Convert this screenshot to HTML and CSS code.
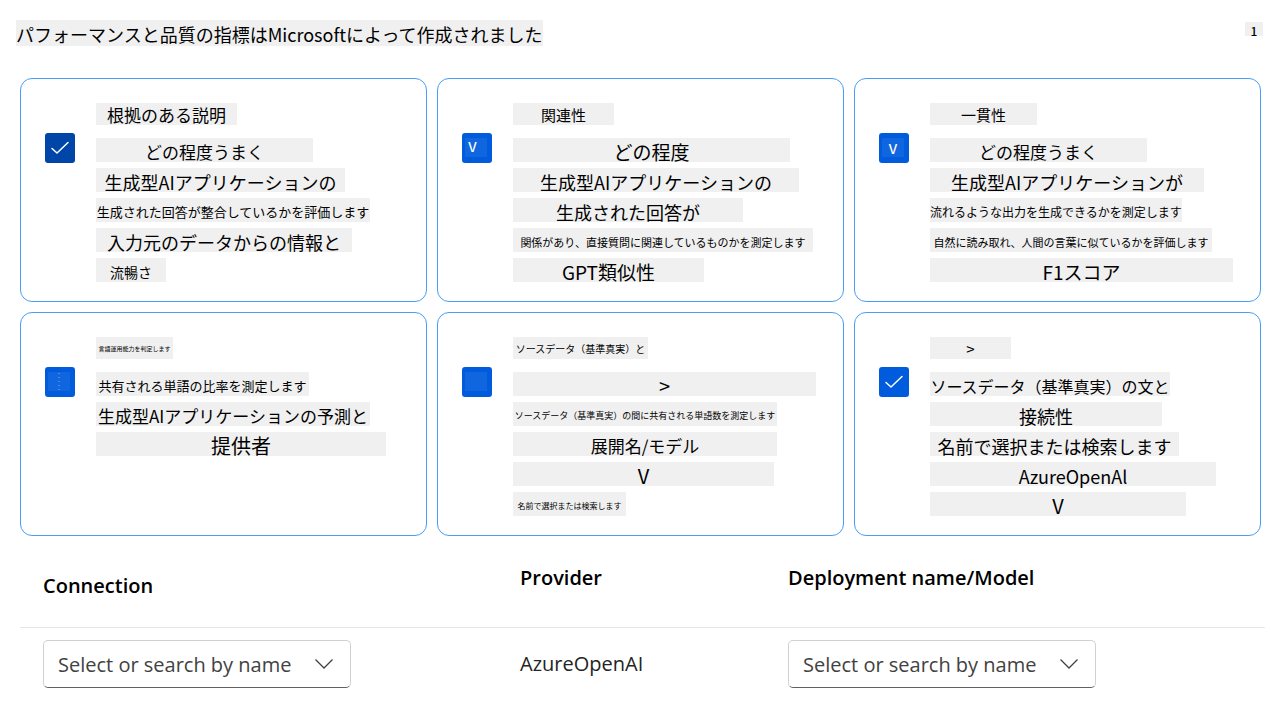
FILE: index.html
```html
<!DOCTYPE html>
<html lang="ja">
<head>
<meta charset="utf-8">
<title>パフォーマンスと品質の指標</title>
<link rel="stylesheet" href="styles.css">
</head>
<body>
<header class="top">
  <h1 class="heading">パフォーマンスと品質の指標はMicrosoftによって作成されました</h1>
  <span class="count">1</span>
</header>

<main>
  <section class="cards">
    <article class="card">
      <span class="check check-dark">
        <input type="checkbox" id="m1" checked>
        <svg class="tick" viewBox="0 0 30 30"><path d="M7 15.500L12 20L23 9.500"/></svg>
      </span>
      <div class="lines">
        <label class="line title f17 w141" for="m1">根拠のある説明</label>
        <p class="line f17 w217">どの程度うまく</p>
        <p class="line f18 w249">生成型AIアプリケーションの</p>
        <p class="line f13 w274">生成された回答が整合しているかを評価します</p>
        <p class="line f18 w256">入力元のデータからの情報と</p>
        <p class="line f14 w70">流暢さ</p>
      </div>
    </article>

    <article class="card">
      <span class="check">
        <input type="checkbox" id="m2" checked>
        <span class="patch patch-left">v</span>
      </span>
      <div class="lines">
        <label class="line title f15 w101" for="m2">関連性</label>
        <p class="line f19 w277">どの程度</p>
        <p class="line f18 w286">生成型AIアプリケーションの</p>
        <p class="line f18 w230">生成された回答が</p>
        <p class="line f11 w300">関係があり、直接質問に関連しているものかを測定します</p>
        <p class="line f19 w191">GPT類似性</p>
      </div>
    </article>

    <article class="card">
      <span class="check">
        <input type="checkbox" id="m3" checked>
        <span class="patch">v</span>
      </span>
      <div class="lines">
        <label class="line title f15 w107" for="m3">一貫性</label>
        <p class="line f17 w217">どの程度うまく</p>
        <p class="line f18 w274">生成型AIアプリケーションが</p>
        <p class="line f12 w252">流れるような出力を生成できるかを測定します</p>
        <p class="line f11 w282">自然に読み取れ、人間の言葉に似ているかを評価します</p>
        <p class="line f19 w303">F1スコア</p>
      </div>
    </article>

    <article class="card">
      <span class="check">
        <input type="checkbox" id="m4" checked>
        <span class="patch"><svg class="dots" viewBox="0 0 22 19"><path d="M11 1v18"/></svg></span>
      </span>
      <div class="lines">
        <label class="line title f6 w77" for="m4">言語運用能力を判定します</label>
        <p class="line f13 w213">共有される単語の比率を測定します</p>
        <p class="line f17 w274">生成型AIアプリケーションの予測と</p>
        <p class="line f20 w290">提供者</p>
      </div>
    </article>

    <article class="card">
      <span class="check">
        <input type="checkbox" id="m5" checked>
        <span class="patch"></span>
      </span>
      <div class="lines">
        <label class="line title f10 w135" for="m5">ソースデータ（基準真実）と</label>
        <p class="line f20 w303">&gt;</p>
        <p class="line f9 w264">ソースデータ（基準真実）の間に共有される単語数を測定します</p>
        <p class="line f17 w264">展開名/モデル</p>
        <p class="line f20 w261">V</p>
        <p class="line f8 w113">名前で選択または検索します</p>
      </div>
    </article>

    <article class="card">
      <span class="check">
        <input type="checkbox" id="m6" checked>
        <svg class="tick" viewBox="0 0 30 30"><path d="M7 15.500L12 20L23 9.500"/></svg>
      </span>
      <div class="lines">
        <label class="line title f15 w81" for="m6">&gt;</label>
        <p class="line f16 w240">ソースデータ（基準真実）の文と</p>
        <p class="line f18 w232">接続性</p>
        <p class="line f18 w249">名前で選択または検索します</p>
        <p class="line f18 w286">AzureOpenAl</p>
        <p class="line f20 w256">V</p>
      </div>
    </article>
  </section>

  <table class="setup">
    <thead>
      <tr>
        <th class="col-connection low" scope="col" id="h-connection">Connection</th>
        <th class="col-provider" scope="col">Provider</th>
        <th scope="col" id="h-model">Deployment name/Model</th>
      </tr>
    </thead>
    <tbody>
      <tr>
        <td class="col-connection">
          <div class="picker">
            <select aria-labelledby="h-connection"><option>Select or search by name</option></select>
            <svg class="chevron" viewBox="0 0 20 12"><path d="M1.500 1.500L10 10L18.500 1.500"/></svg>
          </div>
        </td>
        <td class="col-provider">AzureOpenAI</td>
        <td>
          <div class="picker">
            <select aria-labelledby="h-model"><option>Select or search by name</option></select>
            <svg class="chevron" viewBox="0 0 20 12"><path d="M1.500 1.500L10 10L18.500 1.500"/></svg>
          </div>
        </td>
      </tr>
    </tbody>
  </table>
</main>
</body>
</html>
```
FILE: styles.css
```css
* { box-sizing: border-box; }

body {
  margin: 0;
  padding: 20px 23px 0 20px;
  background: #fff;
  color: #000;
  font-family: "Noto Sans CJK JP", sans-serif;
}

.top {
  display: flex;
  justify-content: space-between;
  align-items: flex-start;
  height: 58px;
  margin-left: -4px;
}

.heading {
  margin: 0;
  padding: 3px 0 1px;
  background: #f0f0f0;
  font-size: 18px;
  font-weight: 400;
  line-height: 22px;
  white-space: nowrap;
}

.count {
  margin: 2px 2px 0 0;
  width: 18px;
  height: 14px;
  background: #f0f0f0;
  font-size: 12px;
  font-weight: 500;
  line-height: 18px;
  text-align: center;
}

.cards {
  display: grid;
  grid-template-columns: repeat(3, 1fr);
  gap: 10px;
  margin-right: 4px;
}

.card {
  display: flex;
  align-items: flex-start;
  gap: 21px;
  min-height: 224px;
  padding: 24px 10px 17px 24px;
  border: 1px solid #479ef5;
  border-radius: 12px;
}

.check {
  position: relative;
  flex: none;
  width: 30px;
  height: 30px;
  margin-top: 30px;
}

.check input {
  appearance: none;
  display: block;
  width: 30px;
  height: 30px;
  margin: 0;
  border-radius: 3px;
  background: #005cdc;
}

.check-dark input { background: #0046a8; }

.tick, .patch { position: absolute; pointer-events: none; }

.tick { inset: 0; }

.tick path {
  fill: none;
  stroke: #fff;
  stroke-width: 1.500;
  stroke-linecap: round;
  stroke-linejoin: round;
}

.patch {
  top: 5px;
  left: 3px;
  width: 22px;
  height: 19px;
  background: #1066df;
  color: #fff;
  font-size: 17px;
  line-height: 18px;
  text-align: center;
}

.patch-left { text-align: left; padding-left: 3px; line-height: 14px; }

.dots { display: block; }

.dots path {
  fill: none;
  stroke: #9aa9c4;
  stroke-width: 1;
  stroke-dasharray: 1 3;
}

.lines {
  display: flex;
  flex-direction: column;
  align-items: flex-start;
  gap: 6px;
}

.line {
  margin: 0;
  height: 24px;
  padding-top: 4px;
  background: #f0f0f0;
  line-height: 20px;
  text-align: center;
  white-space: nowrap;
}

.title { height: 22px; margin-bottom: 7px; padding-top: 2px; }

.f6 { font-size: 6px; }
.f8 { font-size: 8px; }
.f9 { font-size: 9px; }
.f10 { font-size: 10px; }
.f11 { font-size: 11px; }
.f12 { font-size: 12px; }
.f13 { font-size: 13px; }
.f14 { font-size: 14px; }
.f15 { font-size: 15px; }
.f16 { font-size: 16px; }
.f17 { font-size: 17px; }
.f18 { font-size: 18px; }
.f19 { font-size: 19px; }
.f20 { font-size: 20px; }

.w70 { width: 70px; }
.w77 { width: 77px; }
.w81 { width: 81px; }
.w101 { width: 101px; }
.w107 { width: 107px; }
.w113 { width: 113px; }
.w135 { width: 135px; }
.w141 { width: 141px; }
.w191 { width: 191px; }
.w213 { width: 213px; }
.w217 { width: 217px; }
.w230 { width: 230px; }
.w232 { width: 232px; }
.w240 { width: 240px; }
.w249 { width: 249px; }
.w252 { width: 252px; }
.w256 { width: 256px; }
.w261 { width: 261px; }
.w264 { width: 264px; }
.w274 { width: 274px; }
.w277 { width: 277px; }
.w282 { width: 282px; }
.w286 { width: 286px; }
.w290 { width: 290px; }
.w300 { width: 300px; }
.w303 { width: 303px; }

.setup {
  width: 100%;
  table-layout: fixed;
  border-collapse: collapse;
  font-family: "Open Sans", sans-serif;
  font-size: 20px;
  line-height: 28px;
  text-align: left;
}

.setup th {
  height: 91px;
  padding: 28px 0 0;
  border-bottom: 1px solid #e6e6e6;
  font-weight: 600;
  vertical-align: top;
}

.setup th.low { padding-top: 36px; }

.setup td {
  padding: 12px 0;
  color: #242424;
}

.setup .col-connection { width: 500px; padding-left: 23px; }

.setup .col-provider { width: 268px; }

.picker {
  position: relative;
  width: 308px;
}

.picker select {
  appearance: none;
  display: block;
  width: 100%;
  height: 48px;
  padding: 3px 50px 0 14px;
  border: 1px solid #d1d1d1;
  border-bottom-color: #616161;
  border-radius: 5px;
  background: #fff;
  color: #424242;
  font: inherit;
}

.chevron {
  position: absolute;
  top: 18px;
  right: 17px;
  width: 20px;
  height: 12px;
  pointer-events: none;
}

.chevron path {
  fill: none;
  stroke: #424242;
  stroke-width: 1.300;
}
```
